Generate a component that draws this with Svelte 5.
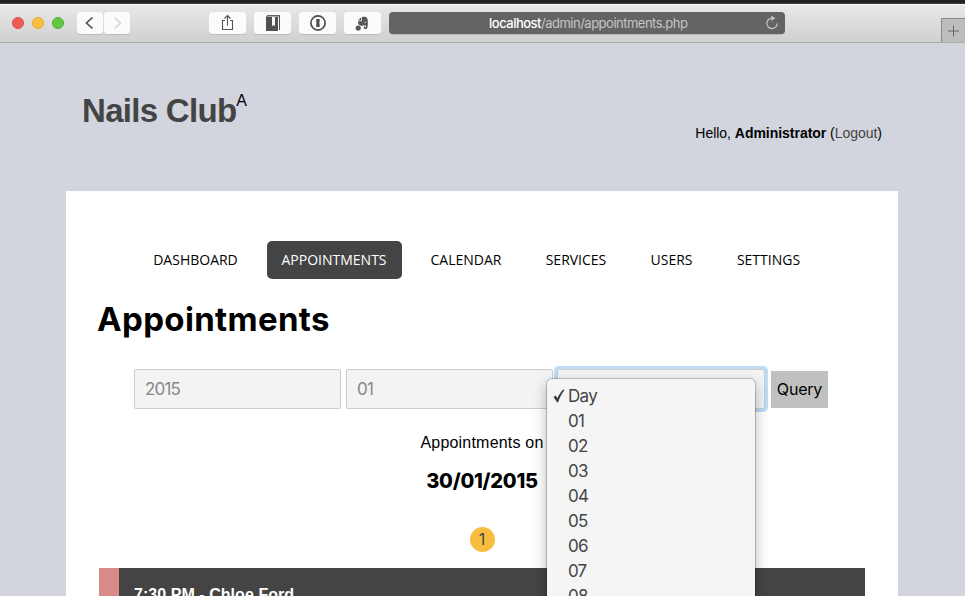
<script>
  const tabs = [
    { label: 'DASHBOARD', width: 114 },
    { label: 'APPOINTMENTS', width: 135, active: true },
    { label: 'CALENDAR', width: 101 },
    { label: 'SERVICES', width: 91 },
    { label: 'USERS', width: 72 },
    { label: 'SETTINGS', width: 94 }
  ];
  const days = ['Day', '01', '02', '03', '04', '05', '06', '07', '08'];
</script>

<div class="window">
  <div class="strip"></div>
  <header class="toolbar">
    <div class="lights"><i class="red"></i><i class="amber"></i><i class="green"></i></div>
    <div class="history">
      <span class="btn nav-btn"><svg width="26" height="22" viewBox="0 0 26 22"><path d="M15.5 5.5 9.5 11l6 5.5" fill="none" stroke="#4d4d4d" stroke-width="1.6" /></svg></span>
      <span class="btn nav-btn"><svg width="26" height="22" viewBox="0 0 26 22"><path d="m10.5 5.5 6 5.5-6 5.5" fill="none" stroke="#d2d2d2" stroke-width="1.4" /></svg></span>
    </div>
    <div class="tools">
      <span class="btn"><svg width="37" height="22" viewBox="0 0 37 22"><path d="M16 8.5h-2.500v9h10v-9H21M18.500 13.500V3.500M15.500 6.500l3-3 3 3" fill="none" stroke="#555" stroke-width="1.1" /></svg></span>
      <span class="btn"><svg width="37" height="22" viewBox="0 0 37 22"><path d="M12 4.500 13.500 3H26v15h-1V5h-1v14H12z" fill="#505050" /><path d="M13 4.300h12" stroke="#ddd" stroke-width=".8" /><path d="M18 5h3v9.500l-1.500-1.700-1.500 1.700z" fill="#fafafa" /></svg></span>
      <span class="btn"><svg width="37" height="22" viewBox="0 0 37 22"><circle cx="19" cy="11" r="7.100" fill="none" stroke="#4d4d4d" stroke-width="1.700" /><path d="M17.200 7h3.400v3.500l-.6.600.6.600V15h-3.400v-3.500l.6-.6-.6-.6z" fill="#4d4d4d" /></svg></span>
      <span class="btn"><svg width="37" height="22" viewBox="0 0 37 22"><path d="M14 8.500 17 5.500v3zM17.800 5c3-.8 5 .2 5.400 1 .8 2.500.9 6 .3 9-.3 2-1.400 2.300-2.800 2-1.500-.5-1.200-2.700.1-2.700.8 0 .7 1.200.1 1.300h1.200v-2h-2.300c-.4-1-.5-.6-.9.100-1.500.6-4.200-.4-4.800-2.200V9.300h3.700z" fill="#555" /><path d="M20.500 10.300h1.800" stroke="#fafafa" stroke-width=".8" /><circle cx="14.200" cy="16" r="2.600" fill="#555" /></svg></span>
    </div>
    <div class="address">
      <span class="url"><b>localhost</b>/admin/appointments.php</span>
      <svg width="14" height="16" viewBox="0 0 14 16"><path d="M7 3.200a5.200 5.200 0 1 0 5.200 5.300" fill="none" stroke="#c6c6c6" stroke-width="1.200" /><path d="M6.300.500v5.400l4-2.700z" fill="#c6c6c6" /></svg>
    </div>
    <span class="new-tab"><svg width="23" height="24" viewBox="0 0 23 24"><path d="M6 12h11M11.500 6.500v11" stroke="#666" stroke-width="1" /></svg></span>
  </header>

  <div class="masthead">
    <div class="brand"><strong>Nails Club</strong><sup>A</sup></div>
    <p class="greeting">Hello, <b>Administrator</b> (<a>Logout</a>)</p>
  </div>

  <main class="panel">
    <nav>
      {#each tabs as tab}
        <a class:active={tab.active} style="width: {tab.width}px">{tab.label}</a>
      {/each}
    </nav>
    <h1>Appointments</h1>
    <div class="filters">
      <div class="field">2015</div>
      <div class="field">01</div>
      <div class="field focused">
        <ul class="menu">
          {#each days as day, i}
            <li class:first={i === 0}>
              <span class="tick">
                {#if i === 0}<svg width="12" height="14" viewBox="0 0 12 14"><path d="M.5 8 2.800 6.500l1.600 2.800C5.800 5.800 7.800 2.800 10.500.300l.9.900C8.800 4.500 6.700 8.500 5.200 13.200H4z" fill="#3d3d3d" /></svg>{/if}
              </span>{day}
            </li>
          {/each}
        </ul>
      </div>
      <div class="query">Query</div>
    </div>
    <p class="caption">Appointments on</p>
    <h2>30/01/2015</h2>
    <span class="count">1</span>
    <div class="entry">7:30 PM - Chloe Ford</div>
  </main>
</div>

<style>
  .window {
    width: 965px;
    height: 596px;
    overflow: hidden;
    background: #d2d5dd;
    color: #000;
    font-family: "Liberation Sans", Arial, sans-serif;
    font-size: 16px;
    display: flex;
    flex-direction: column;
  }
  * { box-sizing: border-box; }
  svg { display: block; flex: none; }
  .strip { height: 4px; flex: none; background: linear-gradient(#222 75%, #354640 75%); }
  .toolbar {
    height: 39px;
    flex: none;
    display: flex;
    align-items: flex-start;
    padding: 8px 0 0 12px;
    background: linear-gradient(#e8e8e8, #d0d0d0);
    border-top: 1px solid #f5f5f5;
    border-bottom: 1px solid #acacac;
  }
  .lights { display: flex; gap: 8px; padding-top: 4px; width: 65px; }
  .lights i { width: 12px; height: 12px; border-radius: 50%; border: 1px solid; }
  .lights .red { background: #ee5c56; border-color: #dc4b46; }
  .lights .amber { background: #f7be40; border-color: #e2a733; }
  .lights .green { background: #61c941; border-color: #4bb02e; }
  .history { display: flex; gap: 1px; width: 132px; margin-top: -1px; }
  .btn {
    width: 37px;
    height: 22px;
    border-radius: 3.500px;
    background: #fbfbfb;
    box-shadow: 0 1px 0 #bcbcbc;
  }
  .nav-btn { width: 26px; }
  .tools { display: flex; gap: 8px; width: 180px; margin-top: -1px; }
  .address {
    width: 396px;
    height: 22px;
    margin-top: -1px;
    border-radius: 4px;
    background: #646464;
    box-shadow: 0 1px 0 #b8b8b8;
    color: #c5c5c5;
    display: flex;
    align-items: center;
    justify-content: space-between;
    padding: 0 6px 0 100px;
    font: 13px/22px Inter, sans-serif;
  }
  .url { white-space: nowrap; letter-spacing: -.5px; }
  .url b { font-weight: 500; color: #fff; }
  .new-tab {
    width: 24px;
    height: 24px;
    margin: 5px 0 0 auto;
    background: #bdbdbd;
    border: solid #8b8b8b;
    border-width: 1px 0 0 1px;
  }
  .masthead {
    height: 148px;
    flex: none;
    display: flex;
    justify-content: space-between;
    padding: 49px 83px 0 82px;
  }
  .brand { display: flex; align-items: flex-start; }
  .brand strong { font-size: 33px; line-height: 38px; color: #444; letter-spacing: -.7px; }
  .brand sup { font-size: 16px; line-height: 18px; }
  .greeting { margin: 32px 0 0; font-size: 14px; line-height: 18px; letter-spacing: -.03px; white-space: nowrap; }
  .greeting a { color: #444; }
  .panel {
    width: 832px;
    height: 405px;
    margin-left: 66px;
    padding: 50px 33px 0;
    background: #fff;
    display: flex;
    flex-direction: column;
    align-items: center;
    flex: none;
  }
  nav { display: flex; gap: 14px; margin-right: 10px; }
  nav a {
    height: 38px;
    border-radius: 5px;
    font: 14px/38px "Open Sans", sans-serif;
    text-align: center;
    white-space: nowrap;
  }
  nav a.active { background: #444; color: #fff; }
  h1 {
    align-self: flex-start;
    margin: 20px 0 0 -2px;
    font: 700 33px/40px Inter, sans-serif;
    letter-spacing: .35px;
    white-space: nowrap;
  }
  .filters { display: flex; gap: 5px; margin-top: 30px; height: 40px; align-self: flex-start; margin-left: 35px; align-items: center; }
  .field {
    width: 207px;
    height: 40px;
    padding-left: 10px;
    border: 1px solid #ccc;
    border-radius: 2px;
    background: #f3f3f3;
    color: #888;
    font: 17px/39px Inter, sans-serif;
    letter-spacing: -.8px;
  }
  .field.focused { position: relative; margin-left: -1px; width: 208px; box-shadow: 0 0 0 3px #bcdcf8; }
  .menu {
    position: absolute;
    left: -11px;
    top: 9px;
    z-index: 2;
    width: 208px;
    height: 240px;
    margin: 0;
    padding: 5px 0;
    list-style: none;
    border-radius: 5px;
    background: #f5f5f5;
    box-shadow: 0 0 0 1px rgba(0, 0, 0, .2), 0 5px 14px rgba(0, 0, 0, .3);
    color: #444;
  }
  .menu li { display: flex; height: 25px; line-height: 25px; padding-left: 6px; }
  .menu li.first { letter-spacing: -.7px; }
  .tick { width: 15px; padding-top: 5px; flex: none; }
  .query {
    width: 57px;
    height: 37px;
    background: #c0c0c0;
    text-align: center;
    margin: 1px 0 0 1px;
    font: 16px/37px Inter, sans-serif;
    letter-spacing: -.2px;
  }
  .caption { margin: 25px 0 0; line-height: 18px; letter-spacing: .2px; }
  h2 { margin: 17px 0 0; font: 800 20px/24px Inter, sans-serif; letter-spacing: -.25px; white-space: nowrap; }
  .count {
    width: 25px;
    height: 25px;
    margin-top: 34px;
    border-radius: 50%;
    background: #f6bd3e;
    color: #444;
    text-align: center;
    font: 16px/25px Inter, sans-serif;
  }
  .entry {
    width: 766px;
    height: 80px;
    margin-top: 16px;
    flex: none;
    padding: 17px 15px;
    border-left: 20px solid #db8a8a;
    background: #444;
    color: #fff;
    font-weight: 700;
    line-height: 20px;
    letter-spacing: .05px;
  }
</style>
